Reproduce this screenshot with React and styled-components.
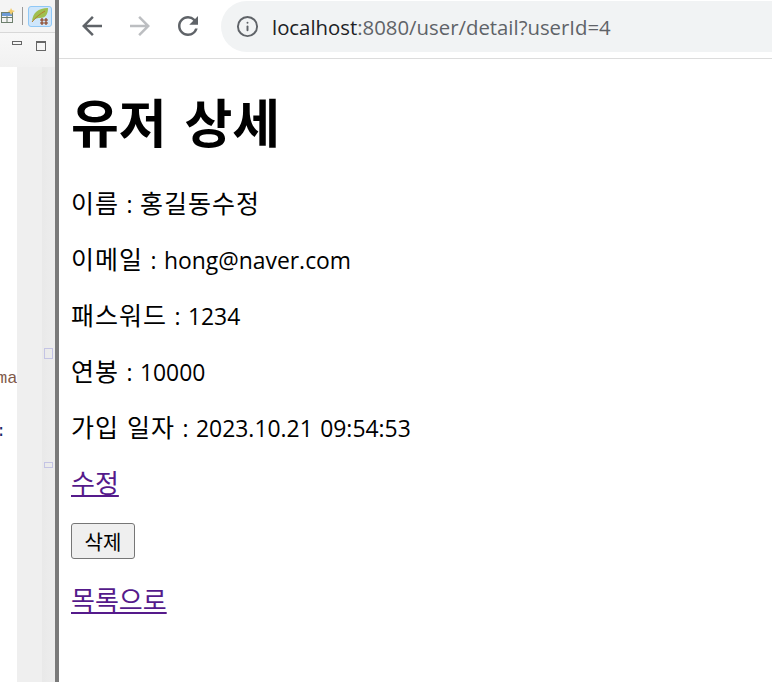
import React from 'react';
import styled, { createGlobalStyle } from 'styled-components';
import { Info } from 'lucide-react';

const GlobalStyle = createGlobalStyle`
  html, body {
    margin: 0;
    height: 100%;
    overflow: hidden;
    background: #fff;
  }
  #root {
    height: 100%;
  }
`;

const Frame = styled.div`
  display: flex;
  width: 772px;
  height: 682px;
  font-family: "Open Sans", "Noto Sans CJK KR", sans-serif;
  color: #000;
`;

const Ide = styled.aside`
  flex: 0 0 55px;
  display: flex;
  flex-direction: column;
  overflow: hidden;
  background: #fff;
`;

const IdeToolbar = styled.div`
  height: 33px;
  flex: none;
  display: flex;
  align-items: center;
  justify-content: flex-end;
  padding-right: 3px;
  background: #f4f4f4;
  border-bottom: 1px solid #d8d8d8;
  box-sizing: border-box;
`;

const GridIcon = styled.svg`
  margin-right: 7px;
`;

const ToolSeparator = styled.span`
  width: 1px;
  height: 18px;
  margin-right: 5px;
  background: #9a9a9a;
`;

const PluginButton = styled.span`
  width: 24px;
  height: 21px;
  display: flex;
  align-items: center;
  justify-content: center;
  box-sizing: border-box;
  background: #cfe6fb;
  border: 1px solid #90c8f6;
  border-radius: 3px;
`;

const ViewControls = styled.div`
  height: 34px;
  flex: none;
  display: flex;
  align-items: flex-start;
  padding: 8px 0 0 12px;
  gap: 14px;
  background: linear-gradient(#f8f8f8, #f1f1f1);
  box-sizing: border-box;
`;

const MinimizeIcon = styled.span`
  width: 8px;
  height: 2px;
  border: 1px solid #666;
`;

const MaximizeIcon = styled.span`
  width: 8px;
  height: 7px;
  border: 1px solid #666;
  border-top-width: 2px;
`;

const EditorArea = styled.div`
  flex: 1;
  display: flex;
`;

const CodeColumn = styled.div`
  flex: 0 0 17px;
  display: flex;
  flex-direction: column;
  overflow: hidden;
  background: #fff;
`;

const CodeLine = styled.span`
  display: block;
  margin: ${(p) => p.$top}px 0 0 ${(p) => p.$left}px;
  font-family: "Liberation Mono", monospace;
  font-size: 17px;
  line-height: 20px;
  white-space: nowrap;
  color: ${(p) => p.$color};
`;

const Ruler = styled.div`
  flex: 1;
  display: flex;
  flex-direction: column;
  align-items: flex-end;
  padding: 281px 2px 0 0;
  background: linear-gradient(90deg, #efefef 0 25px, #e9e9e9 25px, #ededed 100%);
`;

const FoldMarker = styled.span`
  width: 7px;
  height: ${(p) => p.$height}px;
  margin-top: ${(p) => p.$top}px;
  border: 1px solid #c4c4e4;
`;

const Divider = styled.div`
  flex: 0 0 4px;
  background: #7a7a7a;
`;

const Browser = styled.main`
  flex: 1;
  min-width: 0;
  display: flex;
  flex-direction: column;
  overflow: hidden;
  background: #fff;
`;

const NavBar = styled.header`
  height: 59px;
  flex: none;
  display: flex;
  align-items: flex-start;
  box-sizing: border-box;
  border-bottom: 1px solid #dcdcdc;
`;

const NavIcons = styled.div`
  display: flex;
  gap: 18px;
  padding: 11px 0 0 18px;
`;

const NavIcon = styled.svg`
  display: block;
  width: 30px;
  height: 30px;
  fill: ${(p) => (p.$disabled ? '#bcbec1' : '#5f6368')};
`;

const AddressBar = styled.div`
  flex: 1;
  height: 51px;
  margin: 1px 0 0 18px;
  padding-left: 15px;
  display: flex;
  align-items: center;
  gap: 13px;
  background: #f1f3f4;
  border-radius: 26px 0 0 26px;
  color: #5f6368;
`;

const Url = styled.span`
  font-size: 20.35px;
  color: #5f6368;
  white-space: nowrap;
`;

const Host = styled.span`
  color: #202124;
`;

const Page = styled.div`
  padding: 0 12px;
`;

const Title = styled.h1`
  margin: 27px 0 30px;
  font-family: "Noto Sans CJK KR", sans-serif;
  font-size: 52px;
  line-height: 70px;
  font-weight: 700;
  word-spacing: 6px;
`;

const Field = styled.p`
  height: 32px;
  margin: 0 0 24px;
  font-size: 22.9px;
  line-height: 32px;
  word-spacing: 1.5px;
  white-space: nowrap;
`;

// hangul runs are set larger, the fallback font is narrower than the reference's
const Ko = styled.span`
  font-family: "Noto Sans CJK KR", sans-serif;
  font-size: 25px;
  letter-spacing: 1px;
  line-height: 32px;
`;

const Action = styled.a`
  font-family: "Noto Sans CJK KR", sans-serif;
  color: #551a8b;
  text-decoration: underline;
  font-size: 26px;
  line-height: 32px;
`;

const ActionRow = styled.p`
  height: 32px;
  margin: 0 0 24px;
  line-height: 32px;
`;

const DeleteButton = styled.button`
  display: block;
  width: 64px;
  height: 36px;
  padding: 0;
  margin: 25px 0 24px;
  font-family: "Noto Sans CJK KR", sans-serif;
  font-size: 20px;
  color: #000;
  background: #efefef;
  border: 1px solid #767676;
  border-radius: 3px;
`;

export default function App() {
  return (
    <>
      <GlobalStyle />
      <Frame>
        <Ide>
          <IdeToolbar>
            <GridIcon width="15" height="16" viewBox="0 0 15 16">
              <rect x="1.5" y="4.5" width="11" height="10" fill="#f4f4f4" stroke="#6d7f6d" />
              <path d="M2 5h10v3H2z" fill="#6d9bd6" />
              <path d="M1.5 9.5h11M7 8v6.5" stroke="#6d7f6d" fill="none" />
              <path d="M11 0l1.2 2.3L15 3l-2.3 1.3L11 7 9.8 4.3 7.5 3l2.6-.7z" fill="#f2cb6b" />
            </GridIcon>
            <ToolSeparator />
            <PluginButton>
              <svg width="18" height="18" viewBox="0 0 18 18">
                <path d="M1 14C2 6 7 1 17 1c0 7-3 10-8 10-4 0-5 1-8 3z" fill="#9fbf4f" />
                <path d="M1 15C5 10 9 7 14 4" stroke="#b57a2a" strokeWidth="1" fill="none" />
                <path d="M11 11v7M15 11v7M9 13h8M9 16h8" stroke="#8a3f1d" strokeWidth="1.2" fill="none" />
              </svg>
            </PluginButton>
          </IdeToolbar>
          <ViewControls>
            <MinimizeIcon />
            <MaximizeIcon />
          </ViewControls>
          <EditorArea>
            <CodeColumn>
              <CodeLine $top={302} $left={-3} $color="#7f5a4a">ma</CodeLine>
              <CodeLine $top={33} $left={-4} $color="#1a2a6a">:</CodeLine>
            </CodeColumn>
            <Ruler>
              <FoldMarker $height={9} $top={0} />
              <FoldMarker $height={4} $top={103} />
            </Ruler>
          </EditorArea>
        </Ide>
        <Divider />
        <Browser>
          <NavBar>
            <NavIcons>
              <NavIcon viewBox="0 0 24 24">
                <path d="M20 11H7.83l5.59-5.59L12 4l-8 8 8 8 1.41-1.41L7.83 13H20v-2z" />
              </NavIcon>
              <NavIcon viewBox="0 0 24 24" $disabled>
                <path d="M12 4l-1.41 1.41L16.17 11H4v2h12.17l-5.58 5.59L12 20l8-8z" />
              </NavIcon>
              <NavIcon viewBox="0 0 24 24">
                <path d="M17.65 6.35A7.958 7.958 0 0 0 12 4c-4.42 0-7.99 3.58-7.99 8s3.57 8 7.99 8c3.73 0 6.84-2.55 7.73-6h-2.08A5.99 5.99 0 0 1 12 18c-3.31 0-6-2.69-6-6s2.69-6 6-6c1.66 0 3.14.69 4.22 1.78L13 11h7V4l-2.35 2.35z" />
              </NavIcon>
            </NavIcons>
            <AddressBar>
              <Info size={23} strokeWidth={2} />
              <Url><Host>localhost</Host>:8080/user/detail?userId=4</Url>
            </AddressBar>
          </NavBar>
          <Page>
            <Title>유저 상세</Title>
            <Field><Ko>이름</Ko> : <Ko>홍길동수정</Ko></Field>
            <Field><Ko>이메일</Ko> : hong@naver.com</Field>
            <Field><Ko>패스워드</Ko> : 1234</Field>
            <Field><Ko>연봉</Ko> : 10000</Field>
            <Field><Ko>가입 일자</Ko> : 2023.10.21 09:54:53</Field>
            <ActionRow><Action href="#edit">수정</Action></ActionRow>
            <DeleteButton>삭제</DeleteButton>
            <ActionRow><Action href="#list">목록으로</Action></ActionRow>
          </Page>
        </Browser>
      </Frame>
    </>
  );
}
